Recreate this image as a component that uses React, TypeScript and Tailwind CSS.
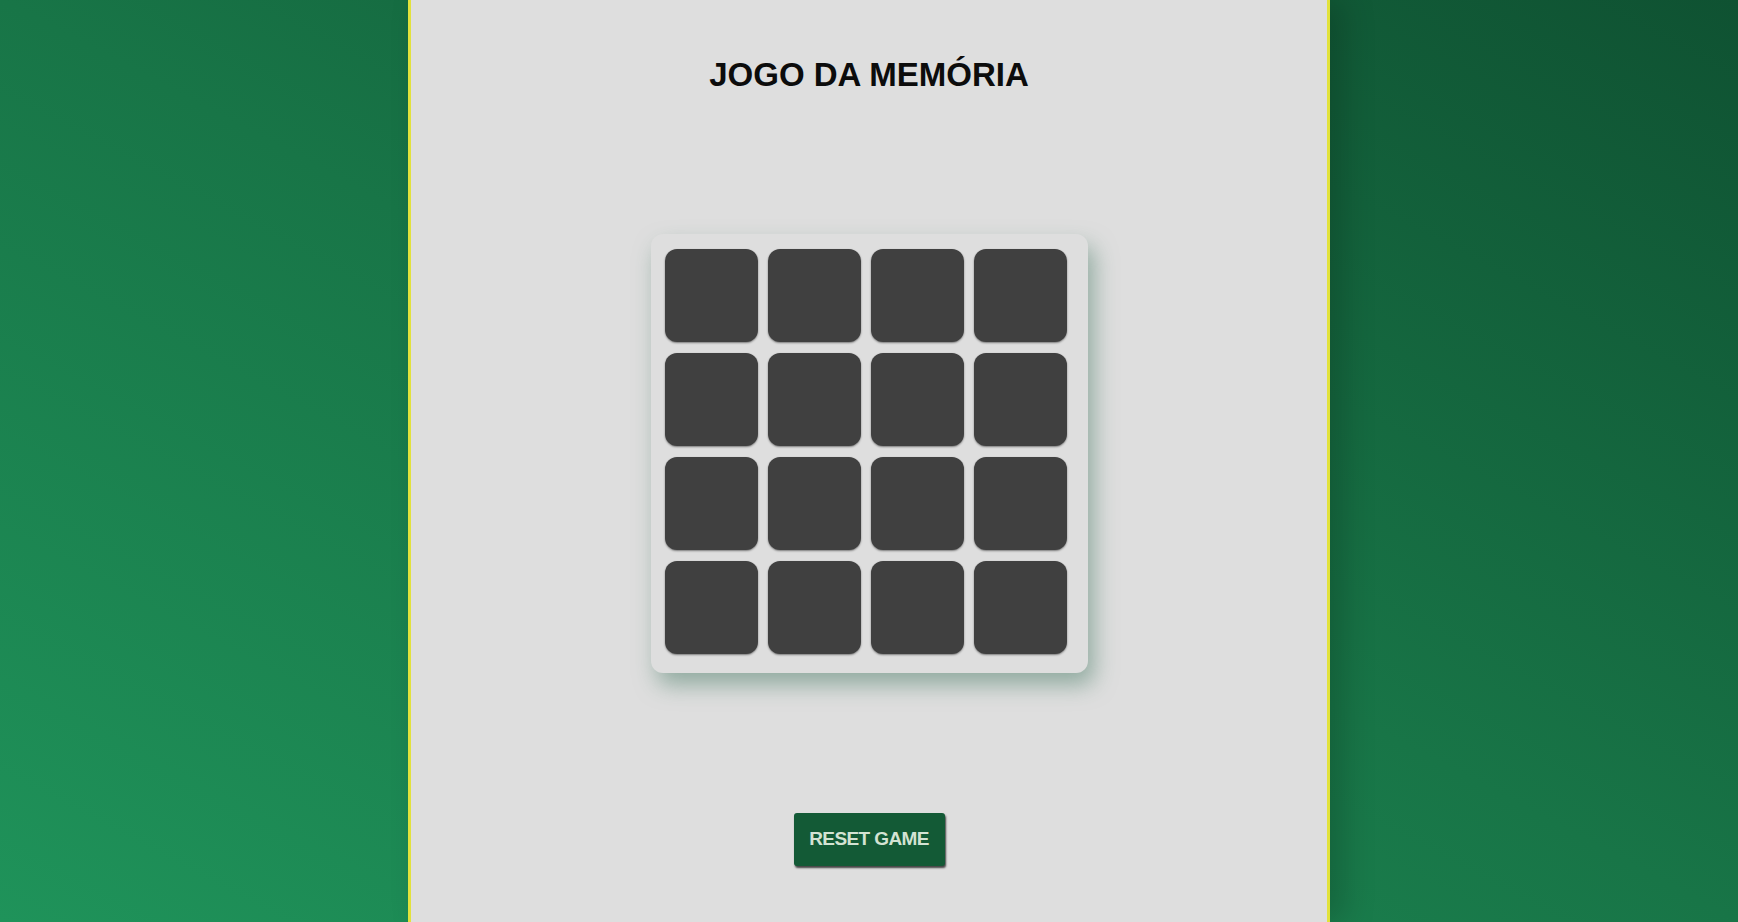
export default function App() {
  const cards = Array.from({ length: 16 }, (_, i) => i);

  return (
    <div
      className="min-h-screen w-full flex justify-center bg-linear-to-bl from-[#0f5232] via-[#187547] to-[#1f935a]"
      style={{ fontFamily: '"Liberation Sans", Arial, sans-serif' }}
    >
      {/* Main panel */}
      <main className="w-[53%] min-h-screen flex flex-col items-center bg-[#dedede] border-x-[3px] border-[#e2e23c] shadow-[14px_0_30px_rgba(0,0,0,0.18)]">
        <h1 className="mt-[56px] text-[33px] leading-[37px] font-bold text-[#0c0c0c]">JOGO DA MEMÓRIA</h1>

        {/* Board */}
        <div className="mt-[141px] w-[437px] h-[439px] rounded-[12px] bg-[#dedede] pl-[14px] pt-[15px] shadow-[6px_12px_22px_rgba(120,155,140,0.75)]">
          <div className="grid grid-cols-[repeat(4,93px)] gap-x-[10px] gap-y-[11px]">
            {cards.map((c) => (
              <div
                key={c}
                className="w-[93px] h-[93px] rounded-[12px] bg-[#404040] shadow-[0_1px_2px_rgba(0,0,0,0.45)]"
              />
            ))}
          </div>
        </div>

        <button className="mt-[140px] w-[151px] h-[53px] rounded-[3px] bg-[#135a36] text-[#d3e3d3] text-[19px] tracking-[-0.6px] font-bold shadow-[1px_2px_2px_rgba(0,0,0,0.7)]">
          RESET GAME
        </button>
      </main>
    </div>
  );
}
